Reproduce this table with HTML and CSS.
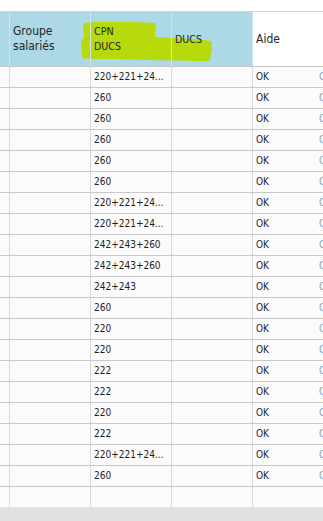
FILE: index.html
```html
<!DOCTYPE html>
<html lang="fr">
<head>
<meta charset="utf-8">
<link rel="stylesheet" href="styles.css">
</head>
<body>
<div class="page">
  <div class="grid">
    <div class="row head">
      <div class="cell"></div>
      <div class="cell big"><span>Groupe<br>salariés</span></div>
      <div class="cell small"><span>CPN<br>DUCS</span></div>
      <div class="cell small"><span>DUCS</span></div>
      <div class="cell aide big"><span>Aide</span></div>
      <div class="cell link"></div>
      <svg class="marker" width="140" height="45" viewBox="0 0 140 45">
        <path d="M4 2 C20 0 50 1 76 2 L75 16 C95 17 120 18 131 20 L132 27 C131 32 130 38 130 40 C110 40 60 39 30 38 C18 38 8 38 2 37 L1 20 C2 18 3 17 4 16 C3 10 3 5 4 2 Z" fill="#b6da0c"/>
      </svg>
    </div>
    <div class="row"><div class="cell"></div><div class="cell"></div><div class="cell">220+221+24...</div><div class="cell"></div><div class="cell aide">OK</div><div class="cell link">Consulter</div></div>
    <div class="row"><div class="cell"></div><div class="cell"></div><div class="cell">260</div><div class="cell"></div><div class="cell aide">OK</div><div class="cell link">Consulter</div></div>
    <div class="row"><div class="cell"></div><div class="cell"></div><div class="cell">260</div><div class="cell"></div><div class="cell aide">OK</div><div class="cell link">Consulter</div></div>
    <div class="row"><div class="cell"></div><div class="cell"></div><div class="cell">260</div><div class="cell"></div><div class="cell aide">OK</div><div class="cell link">Consulter</div></div>
    <div class="row"><div class="cell"></div><div class="cell"></div><div class="cell">260</div><div class="cell"></div><div class="cell aide">OK</div><div class="cell link">Consulter</div></div>
    <div class="row"><div class="cell"></div><div class="cell"></div><div class="cell">260</div><div class="cell"></div><div class="cell aide">OK</div><div class="cell link">Consulter</div></div>
    <div class="row"><div class="cell"></div><div class="cell"></div><div class="cell">220+221+24...</div><div class="cell"></div><div class="cell aide">OK</div><div class="cell link">Consulter</div></div>
    <div class="row"><div class="cell"></div><div class="cell"></div><div class="cell">220+221+24...</div><div class="cell"></div><div class="cell aide">OK</div><div class="cell link">Consulter</div></div>
    <div class="row"><div class="cell"></div><div class="cell"></div><div class="cell">242+243+260</div><div class="cell"></div><div class="cell aide">OK</div><div class="cell link">Consulter</div></div>
    <div class="row"><div class="cell"></div><div class="cell"></div><div class="cell">242+243+260</div><div class="cell"></div><div class="cell aide">OK</div><div class="cell link">Consulter</div></div>
    <div class="row"><div class="cell"></div><div class="cell"></div><div class="cell">242+243</div><div class="cell"></div><div class="cell aide">OK</div><div class="cell link">Consulter</div></div>
    <div class="row"><div class="cell"></div><div class="cell"></div><div class="cell">260</div><div class="cell"></div><div class="cell aide">OK</div><div class="cell link">Consulter</div></div>
    <div class="row"><div class="cell"></div><div class="cell"></div><div class="cell">220</div><div class="cell"></div><div class="cell aide">OK</div><div class="cell link">Consulter</div></div>
    <div class="row"><div class="cell"></div><div class="cell"></div><div class="cell">220</div><div class="cell"></div><div class="cell aide">OK</div><div class="cell link">Consulter</div></div>
    <div class="row"><div class="cell"></div><div class="cell"></div><div class="cell">222</div><div class="cell"></div><div class="cell aide">OK</div><div class="cell link">Consulter</div></div>
    <div class="row"><div class="cell"></div><div class="cell"></div><div class="cell">222</div><div class="cell"></div><div class="cell aide">OK</div><div class="cell link">Consulter</div></div>
    <div class="row"><div class="cell"></div><div class="cell"></div><div class="cell">220</div><div class="cell"></div><div class="cell aide">OK</div><div class="cell link">Consulter</div></div>
    <div class="row"><div class="cell"></div><div class="cell"></div><div class="cell">222</div><div class="cell"></div><div class="cell aide">OK</div><div class="cell link">Consulter</div></div>
    <div class="row"><div class="cell"></div><div class="cell"></div><div class="cell">220+221+24...</div><div class="cell"></div><div class="cell aide">OK</div><div class="cell link">Consulter</div></div>
    <div class="row"><div class="cell"></div><div class="cell"></div><div class="cell">260</div><div class="cell"></div><div class="cell aide">OK</div><div class="cell link">Consulter</div></div>
    <div class="row empty"><div class="cell"></div><div class="cell"></div><div class="cell"></div><div class="cell"></div><div class="cell aide"></div><div class="cell link"></div></div>
  </div>
  <div class="footer"></div>
</div>
</body>
</html>
```
FILE: styles.css
```css
* { box-sizing: border-box; }
html, body { margin: 0; padding: 0; background: #ffffff; }
body {
  font-family: "DejaVu Sans Condensed", "DejaVu Sans", sans-serif;
  font-size: 10px;
  color: #1e1e1e;
}
.page {
  width: 323px;
  height: 521px;
  overflow: hidden;
  padding-top: 11px;
  display: flex;
  flex-direction: column;
}
.grid { display: flex; flex-direction: column; }
.row {
  display: grid;
  grid-template-columns: 10px 81px 81px 81px 65px 60px;
  height: 21px;
  background: #fbfbfb;
  border-bottom: 1px solid #c9c9c9;
  width: 378px;
}
.row.empty { height: 20px; border-bottom: none; }
.cell {
  border-right: 1px solid #d9d9d9;
  padding-left: 3px;
  line-height: 20px;
  white-space: nowrap;
  overflow: hidden;
}
.cell.aide { border-right: none; }
.cell.link { border-right: none; color: #7aa6cf; padding-left: 1px; }
.row.head {
  position: relative;
  height: 56px;
  border-top: 1px solid #d2d2d2;
  border-bottom: 1px solid #c9c9c9;
  background: #add8e6;
  color: #262626;
}
.head .cell {
  display: flex;
  align-items: center;
  line-height: 15px;
  border-right-color: #cde4ec;
  position: relative;
  z-index: 1;
}
.head .cell.big { font-size: 12px; }
.head .cell.small { font-size: 10.6px; }
.head .cell.aide, .head .cell.link { background: #ffffff; }
.marker {
  position: absolute;
  left: 80px;
  top: 9px;
  z-index: 0;
}
.footer {
  flex: 1;
  background: #e1e1e1;
}
```
